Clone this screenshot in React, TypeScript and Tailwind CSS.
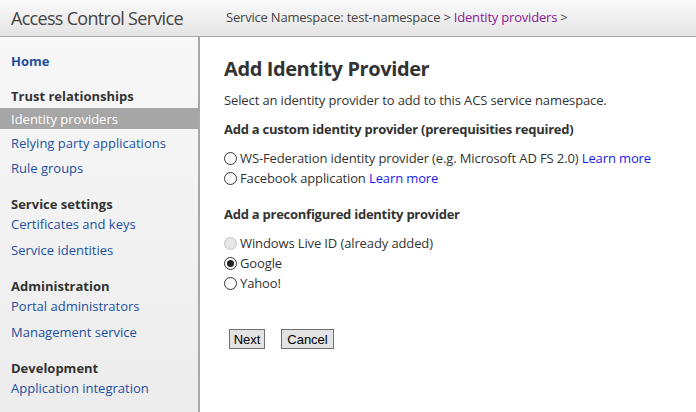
import React from 'react'

const font = { fontFamily: '"Open Sans", "Noto Sans", sans-serif' }

function Radio({ checked, disabled }: { checked?: boolean; disabled?: boolean }) {
  return (
    <span
      className={`inline-flex items-center justify-center w-[13px] h-[13px] rounded-full border mr-[3px] shrink-0 ${
        disabled ? 'border-[#c4c4c4] bg-[#e6e6e6]' : 'border-[#333] bg-white'
      }`}
    >
      {checked && <span className="w-[7px] h-[7px] rounded-full bg-[#222]" />}
    </span>
  )
}

const groups = [
  { title: 'Service settings', items: ['Certificates and keys', 'Service identities'] },
  { title: 'Administration', items: ['Portal administrators', 'Management service'] },
  { title: 'Development', items: ['Application integration'] },
]

export default function App() {
  return (
    <div className="w-[696px] h-[412px] overflow-hidden flex flex-col bg-white text-[13px] text-[#333]" style={font}>
      {/* header */}
      <div className="h-[37px] shrink-0 flex items-center border-b border-[#a8a8a8] bg-gradient-to-b from-[#fafafa] to-[#e4e4e4]">
        <div className="w-[226px] pl-[11px] text-[18px] text-[#444] leading-none tracking-[-0.7px]">Access Control Service</div>
        <div className="text-[#444] tracking-[-0.2px]">
          Service Namespace: test-namespace &gt; <span className="text-[#8b1a95]">Identity providers</span> &gt;
        </div>
      </div>

      <div className="flex flex-1 min-h-0">
        {/* sidebar */}
        <div className="w-[200px] shrink-0 border-r-2 border-[#a8a8a8] bg-gradient-to-b from-[#f8f8f8] to-[#ececec] pt-[14px] leading-5">
          <div className="px-[11px] font-bold text-[#1e4f9c]">Home</div>
          <div className="mt-[15px] px-[11px] font-bold text-[#333]">Trust relationships</div>
          <div className="mt-[2px] h-[21px] flex items-center px-[11px] bg-[#a6a6a6] text-white">Identity providers</div>
          <div className="mt-[4px] px-[11px] text-[#1e50a2]">Relying party applications</div>
          <div className="mt-[5px] px-[11px] text-[#1e50a2]">Rule groups</div>
          {groups.map((g) => (
            <div key={g.title} className="mt-[16px] px-[11px]">
              <div className="font-bold text-[#333]">{g.title}</div>
              {g.items.map((it, i) => (
                <div key={it} className={`text-[#1e50a2] ${i > 0 ? 'mt-[6px]' : ''}`}>{it}</div>
              ))}
            </div>
          ))}
        </div>

        {/* main */}
        <div className="flex-1 pl-6 pt-5 leading-5 tracking-[-0.12px]">
          <h1 className="text-[20px] font-bold leading-6 text-[#333] tracking-[-0.4px]">Add Identity Provider</h1>
          <p className="mt-[9px]">Select an identity provider to add to this ACS service namespace.</p>
          <div className="mt-[9px] font-bold tracking-[-0.25px]">Add a custom identity provider (prerequisities required)</div>
          <div className="mt-[9px]">
            <label className="flex items-center">
              <Radio />
              WS-Federation identity provider (e.g. Microsoft AD FS 2.0)&nbsp;<span className="text-[#1a1aee]">Learn more</span>
            </label>
            <label className="flex items-center">
              <Radio />
              Facebook application&nbsp;<span className="text-[#1a1aee]">Learn more</span>
            </label>
          </div>
          <div className="mt-[16px] font-bold tracking-[-0.25px]">Add a preconfigured identity provider</div>
          <div className="mt-[9px]">
            <label className="flex items-center">
              <Radio disabled />
              Windows Live ID (already added)
            </label>
            <label className="flex items-center">
              <Radio checked />
              Google
            </label>
            <label className="flex items-center">
              <Radio />
              Yahoo!
            </label>
          </div>
          <div className="mt-[36px] ml-[5px] flex gap-[16px] tracking-normal" style={{ fontFamily: '"Liberation Sans", Arial, sans-serif' }}>
            <button className="h-5 w-[36px] border border-[#707070] bg-[#e3e3e3] text-[13px] leading-none text-black">Next</button>
            <button className="h-5 w-[53px] border border-[#707070] bg-[#e3e3e3] text-[13px] leading-none text-black">Cancel</button>
          </div>
        </div>
      </div>
    </div>
  )
}
